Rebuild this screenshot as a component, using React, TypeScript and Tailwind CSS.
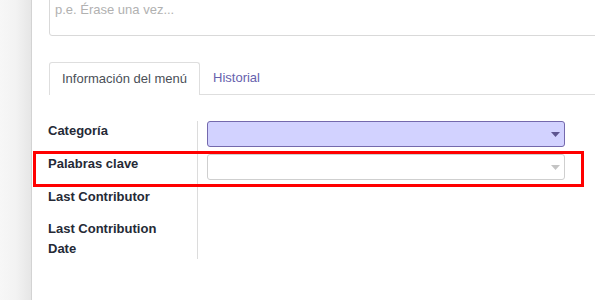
import React from 'react';

interface Campo {
  etiqueta: string[];
  alto: string;
  tipo?: 'activo' | 'vacio';
}

const campos: Campo[] = [
  { etiqueta: ['Categoría'], alto: 'h-[33px]', tipo: 'activo' },
  { etiqueta: ['Palabras clave'], alto: 'h-[33px]', tipo: 'vacio' },
  { etiqueta: ['Last Contributor'], alto: 'h-[32px]' },
  { etiqueta: ['Last Contribution', 'Date'], alto: 'h-[40px]' },
];

function Flecha({ color }: { color: string }) {
  return (
    <svg width="9" height="5" viewBox="0 0 9 5" className="shrink-0">
      <path d="M0 0h9L4.5 5z" fill={color} />
    </svg>
  );
}

function Selector({ tipo }: { tipo: 'activo' | 'vacio' }) {
  const activo = tipo === 'activo';
  return (
    <div
      className={
        activo
          ? 'flex h-[26px] items-center justify-end rounded-[3px] border border-[#7469ad] bg-[#d2d2ff] pr-[4px]'
          : 'flex h-[26px] items-center justify-end rounded-[3px] border border-[#cfcfcf] bg-white pr-[4px]'
      }
    >
      <Flecha color={activo ? '#5d5590' : '#c4c4c4'} />
    </div>
  );
}

export default function App() {
  return (
    <div
      className="relative flex h-[300px] w-[595px] overflow-hidden bg-white text-[13px]"
      style={{ fontFamily: '"Liberation Sans", Arial, sans-serif' }}
    >
      {/* franja lateral */}
      <div className="w-[32px] shrink-0 border-r border-[#d3d3d3] bg-gradient-to-r from-[#f7f7f7] via-[#f3f3f3] to-[#e6e6e6]" />

      <div className="flex min-w-0 flex-1 flex-col">
        {/* descripcion */}
        <div className="-mt-[10px] ml-[17px] -mr-[6px] h-[46px] rounded-[3px] border border-[#d9d9d9] pl-[5px] pt-[10px] leading-[18px] text-[#b1b1b1]">
          p.e. Érase una vez...
        </div>

        {/* pestañas */}
        <div className="ml-[17px] mt-[26px] flex h-[33px] border-b border-[#dedede]">
          <div className="-mb-px flex items-center rounded-t-[3px] border border-b-0 border-[#dedede] bg-white px-[12px] text-[#4a4f57]">
            Información del menú
          </div>
          <div className="flex items-center px-[13px] text-[#6661ad]">Historial</div>
        </div>

        {/* formulario */}
        <div className="ml-[16px] mr-[30px] mt-[26px] grid grid-cols-[150px_1fr]">
          {campos.map((c) => (
            <React.Fragment key={c.etiqueta.join(' ')}>
              <div className={`${c.alto} border-r border-[#dcdcdc] font-bold leading-[20px] text-[#252a36]`}>
                {c.etiqueta.map((l) => (
                  <div key={l}>{l}</div>
                ))}
              </div>
              <div className={`${c.alto} pl-[9px]`}>{c.tipo && <Selector tipo={c.tipo} />}</div>
            </React.Fragment>
          ))}
        </div>
      </div>

      {/* marca roja */}
      <div className="absolute left-[33px] top-[151px] h-[36px] w-[551px] border-[3px] border-[#ff0000]" />
    </div>
  );
}
